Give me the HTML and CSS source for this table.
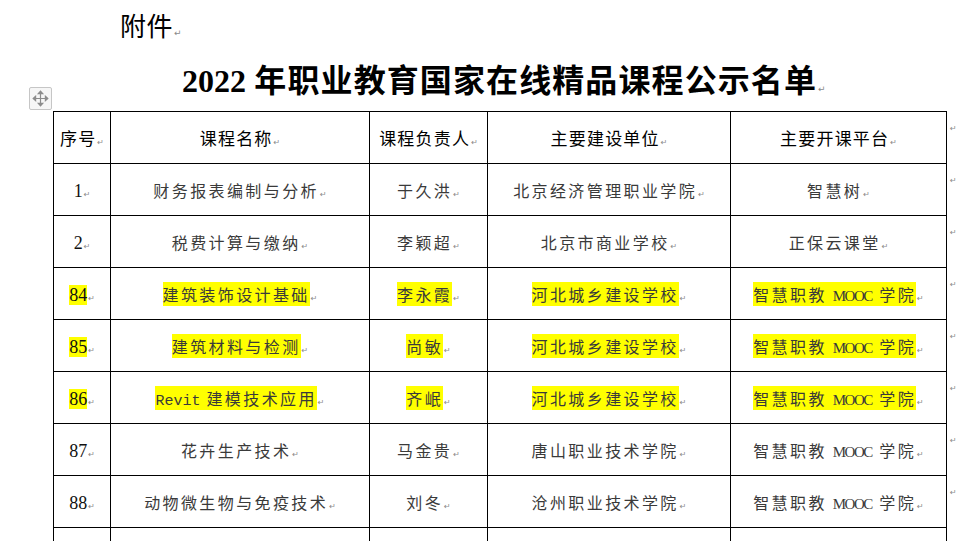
FILE: index.html
```html
<!DOCTYPE html>
<html lang="zh-CN">
<head>
<meta charset="utf-8">
<title>2022年职业教育国家在线精品课程公示名单</title>
<link rel="stylesheet" href="styles.css">
</head>
<body>
<div class="doc">
  <p class="attach">附件<span class="pm">↵</span></p>
  <h1 class="title"><span class="yr">2022</span> 年职业教育国家在线精品课程公示名单<span class="pm">↵</span></h1>
  <div class="table-wrap">
    <span class="move-handle">
      <svg width="21" height="21" viewBox="0 0 21 21" fill="none" stroke="#8c8c8c" stroke-width="1.2">
        <path d="M10.5 4v13M4 10.5h13"/>
        <path d="M8.3 5.6L10.5 3.2L12.7 5.6Z M8.3 15.4L10.5 17.8L12.7 15.4Z M5.6 8.3L3.2 10.5L5.6 12.7Z M15.4 8.3L17.8 10.5L15.4 12.7Z" fill="#8c8c8c"/>
      </svg>
    </span>
    <table class="list">
      <colgroup>
        <col class="c1"><col class="c2"><col class="c3"><col class="c4"><col class="c5"><col class="c6">
      </colgroup>
      <thead>
        <tr>
          <th>序号<span class="pm">↵</span></th>
          <th>课程名称<span class="pm">↵</span></th>
          <th>课程负责人<span class="pm">↵</span></th>
          <th>主要建设单位<span class="pm">↵</span></th>
          <th>主要开课平台<span class="pm">↵</span></th>
          <td class="eor"><span class="pm">↵</span></td>
        </tr>
      </thead>
      <tbody>
        <tr>
          <td><span class="n">1</span><span class="pm">↵</span></td>
          <td>财务报表编制与分析<span class="pm">↵</span></td>
          <td>于久洪<span class="pm">↵</span></td>
          <td>北京经济管理职业学院<span class="pm">↵</span></td>
          <td>智慧树<span class="pm">↵</span></td>
          <td class="eor"><span class="pm">↵</span></td>
        </tr>
        <tr>
          <td><span class="n">2</span><span class="pm">↵</span></td>
          <td>税费计算与缴纳<span class="pm">↵</span></td>
          <td>李颖超<span class="pm">↵</span></td>
          <td>北京市商业学校<span class="pm">↵</span></td>
          <td>正保云课堂<span class="pm">↵</span></td>
          <td class="eor"><span class="pm">↵</span></td>
        </tr>
        <tr>
          <td><span class="n hl">84</span><span class="pm">↵</span></td>
          <td><span class="hl">建筑装饰设计基础</span><span class="pm">↵</span></td>
          <td><span class="hl">李永霞</span><span class="pm">↵</span></td>
          <td><span class="hl">河北城乡建设学校</span><span class="pm">↵</span></td>
          <td><span class="hl">智慧职教 <span class="mooc">MOOC</span> 学院</span><span class="pm">↵</span></td>
          <td class="eor"><span class="pm">↵</span></td>
        </tr>
        <tr>
          <td><span class="n hl">85</span><span class="pm">↵</span></td>
          <td><span class="hl">建筑材料与检测</span><span class="pm">↵</span></td>
          <td><span class="hl">尚敏</span><span class="pm">↵</span></td>
          <td><span class="hl">河北城乡建设学校</span><span class="pm">↵</span></td>
          <td><span class="hl">智慧职教 <span class="mooc">MOOC</span> 学院</span><span class="pm">↵</span></td>
          <td class="eor"><span class="pm">↵</span></td>
        </tr>
        <tr>
          <td><span class="n hl">86</span><span class="pm">↵</span></td>
          <td><span class="hl"><span class="lat">Revit</span> 建模技术应用</span><span class="pm">↵</span></td>
          <td><span class="hl">齐岷</span><span class="pm">↵</span></td>
          <td><span class="hl">河北城乡建设学校</span><span class="pm">↵</span></td>
          <td><span class="hl">智慧职教 <span class="mooc">MOOC</span> 学院</span><span class="pm">↵</span></td>
          <td class="eor"><span class="pm">↵</span></td>
        </tr>
        <tr>
          <td><span class="n">87</span><span class="pm">↵</span></td>
          <td>花卉生产技术<span class="pm">↵</span></td>
          <td>马金贵<span class="pm">↵</span></td>
          <td>唐山职业技术学院<span class="pm">↵</span></td>
          <td>智慧职教 <span class="mooc">MOOC</span> 学院<span class="pm">↵</span></td>
          <td class="eor"><span class="pm">↵</span></td>
        </tr>
        <tr>
          <td><span class="n">88</span><span class="pm">↵</span></td>
          <td>动物微生物与免疫技术<span class="pm">↵</span></td>
          <td>刘冬<span class="pm">↵</span></td>
          <td>沧州职业技术学院<span class="pm">↵</span></td>
          <td>智慧职教 <span class="mooc">MOOC</span> 学院<span class="pm">↵</span></td>
          <td class="eor"><span class="pm">↵</span></td>
        </tr>
        <tr class="last">
          <td></td><td></td><td></td><td></td><td></td>
          <td class="eor"></td>
        </tr>
      </tbody>
    </table>
  </div>
</div>
</body>
</html>
```
FILE: styles.css
```css
* { box-sizing: border-box; }
html, body { margin: 0; padding: 0; background: #ffffff; }
body {
  width: 970px;
  height: 541px;
  overflow: hidden;
  font-family: "Noto Sans CJK SC", "Noto Sans", sans-serif;
  color: #000;
}
.doc { padding-left: 53px; }

.attach {
  margin: 0 0 0 67px;
  height: 50px;
  line-height: 50px;
  font-size: 26px;
  letter-spacing: 0.5px;
  font-weight: 400;
  color: #000;
}
.title {
  margin: 0 0 0 129px;
  height: 61px;
  line-height: 56px;
  font-size: 32px;
  letter-spacing: 1.1px;
  font-weight: 700;
  white-space: nowrap;
  color: #000;
}
.title .yr { font-family: "Liberation Serif", serif; font-weight: 700; letter-spacing: 0; }

.pm {
  font-family: "DejaVu Sans", sans-serif;
  font-size: 8px;
  font-weight: 400;
  color: #8a8a8a;
  letter-spacing: 0;
  margin-left: 1px;
}
.title .pm, .attach .pm { font-size: 9px; }

.table-wrap { position: relative; }
.move-handle {
  position: absolute;
  left: -24px;
  top: -24px;
  width: 23px;
  height: 23px;
  border: 1px solid #c6c6c6;
  border-radius: 2px;
  background: #f6f6f6;
  display: flex;
  align-items: center;
  justify-content: center;
}

.list {
  border-collapse: collapse;
  table-layout: fixed;
  width: 918px;
}
.c1 { width: 57px; }
.c2 { width: 259px; }
.c3 { width: 118px; }
.c4 { width: 243px; }
.c5 { width: 216px; }
.c6 { width: 25px; }

.list tr { height: 52px; }
.list tr.last { height: 20px; }
.list th, .list td {
  border: 1px solid #000;
  padding: 0;
  text-align: center;
  vertical-align: middle;
  white-space: nowrap;
}
.list th {
  font-size: 17px;
  font-weight: 400;
  letter-spacing: 1.2px;
  color: #000;
}
.list td {
  font-size: 16px;
  letter-spacing: 2.4px;
  color: #3a3a3a;
}
.list td.eor {
  border: none;
  text-align: left;
  vertical-align: top;
  padding: 6px 0 0 2px;
  line-height: 12px;
}
.n {
  font-family: "Liberation Serif", serif;
  font-size: 18px;
  letter-spacing: 0;
  color: #111;
}
.hl { background: #ffff00; }
.lat {
  font-family: "Liberation Mono", monospace;
  font-size: 15px;
  letter-spacing: 0;
}
.mooc {
  font-family: "Liberation Serif", serif;
  font-size: 15px;
  letter-spacing: -1.5px;
  margin-right: 1.5px;
}
```
